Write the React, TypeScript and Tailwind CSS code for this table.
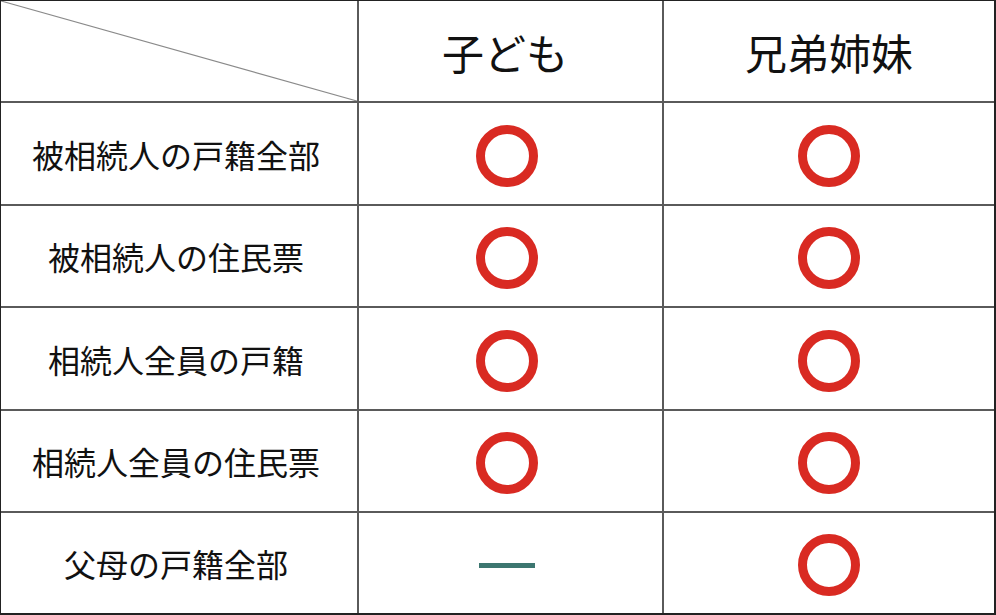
import React from "react";

const Circle = () => (
  <svg width="62" height="62" viewBox="0 0 62 62" className="block">
    <circle cx="31" cy="31" r="26.5" fill="none" stroke="#d92a22" strokeWidth="9" />
  </svg>
);

const Dash = () => <div className="w-[56px] h-[5px] bg-[#3c7670]" />;

const rows: { label: string; a: "o" | "-"; b: "o" | "-" }[] = [
  { label: "被相続人の戸籍全部", a: "o", b: "o" },
  { label: "被相続人の住民票", a: "o", b: "o" },
  { label: "相続人全員の戸籍", a: "o", b: "o" },
  { label: "相続人全員の住民票", a: "o", b: "o" },
  { label: "父母の戸籍全部", a: "-", b: "o" },
];

export default function App() {
  return (
    <div
      className="w-[996px] h-[615px] bg-white border-l border-t border-r-2 border-b-2 border-[#222] overflow-hidden"
      style={{ fontFamily: '"Noto Sans CJK JP", "Noto Sans", sans-serif' }}
    >
      <div className="grid grid-cols-[356px_303px_330px] grid-rows-[100px_101px_100px_101px_100px_100px] gap-[2px] bg-[#5a5a5a] w-full h-full">
        <div className="bg-white relative">
          <svg className="absolute inset-0" width="356" height="100" viewBox="0 0 356 100">
            <line x1="0" y1="0" x2="356" y2="100" stroke="#8a8a8a" strokeWidth="1.2" />
          </svg>
        </div>
        <div className="bg-white flex items-center justify-center pr-[11px] text-[42px] text-[#111]">子ども</div>
        <div className="bg-white flex items-center justify-center text-[42px] text-[#111]">兄弟姉妹</div>
        {rows.map((r) => (
          <React.Fragment key={r.label}>
            <div className="bg-white flex items-center justify-center pr-[6px] text-[32px] text-[#111]">{r.label}</div>
            <div className="bg-white flex items-center justify-center pr-[8px] pt-[4px]">
              {r.a === "o" ? <Circle /> : <Dash />}
            </div>
            <div className="bg-white flex items-center justify-center pt-[4px]">
              {r.b === "o" ? <Circle /> : <Dash />}
            </div>
          </React.Fragment>
        ))}
      </div>
    </div>
  );
}
